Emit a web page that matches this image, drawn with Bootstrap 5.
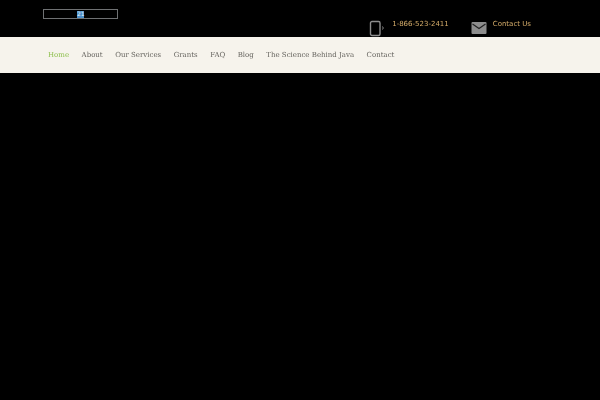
<!DOCTYPE html>
<html lang="en">
<head>
<meta charset="utf-8">
<title>Java</title>
<link href="https://cdn.jsdelivr.net/npm/bootstrap@5.3.0/dist/css/bootstrap.min.css" rel="stylesheet">
<style>
html,body{height:100%}
body{background:#000;font-family:"DejaVu Sans",sans-serif;overflow:hidden;text-rendering:geometricPrecision}
.top-zone{height:37px;padding:9px 69px 0 43px}
.logo-box{width:75px;height:10px;border:1px solid #6f7173}
.logo-mark{width:7px;height:7px;background:#4d8fc9;color:#e6f0f8;font-size:6px;line-height:7px;text-align:center}
.contact-zone{margin-top:9px;margin-left:auto;height:19px;filter:blur(.25px)}
.contact-item{color:#d6ad6a;font-size:7px;line-height:10px;text-decoration:none;white-space:nowrap}
.contact-item span{padding-top:1px}
.phone-wrap{width:23px;padding-top:2px}
.mail-wrap{margin-left:22px;margin-right:6px;padding-top:3px}
.phone-wrap svg,.mail-wrap svg{display:block}
.menu-strip{height:36px;background:#f6f3ec;padding-left:48px;gap:12.500px;font-family:"DejaVu Serif",serif;font-size:7px}
.menu-strip a{color:#65635e;text-decoration:none;white-space:nowrap;filter:blur(.25px)}
.menu-strip a.on{color:#8fc04f}
</style>
</head>
<body>
<header class="top-zone d-flex align-items-start">
  <div class="logo-box d-flex align-items-center justify-content-center"><div class="logo-mark">21</div></div>
  <div class="contact-zone d-flex align-items-start">
    <a class="contact-item d-flex" href="#">
      <div class="phone-wrap"><svg width="16" height="17" viewBox="0 0 16 17"><rect x="1.500" y="1.500" width="9.500" height="14" rx="1.500" fill="none" stroke="#8c8c8c" stroke-width="1.400"/><path d="M13.500 6.500q1.500 1.500 0 3" fill="none" stroke="#8c8c8c"/></svg></div>
      <span>1-866-523-2411</span>
    </a>
    <a class="contact-item d-flex" href="#">
      <div class="mail-wrap"><svg width="16" height="14" viewBox="0 0 16 14"><rect x="0.500" y="1" width="15" height="12" rx="1" fill="#8d8d8d"/><path d="M1.500 3l6.500 4.500 6.500-4.500" fill="none" stroke="#222" stroke-width="1.200"/></svg></div>
      <span>Contact Us</span>
    </a>
  </div>
</header>
<nav class="menu-strip d-flex align-items-center">
  <a class="on" href="#">Home</a><a href="#">About</a><a href="#">Our Services</a><a href="#">Grants</a><a href="#">FAQ</a><a href="#">Blog</a><a href="#">The Science Behind Java</a><a href="#">Contact</a>
</nav>
<script src="https://cdn.jsdelivr.net/npm/bootstrap@5.3.0/dist/js/bootstrap.bundle.min.js"></script>
</body>
</html>
